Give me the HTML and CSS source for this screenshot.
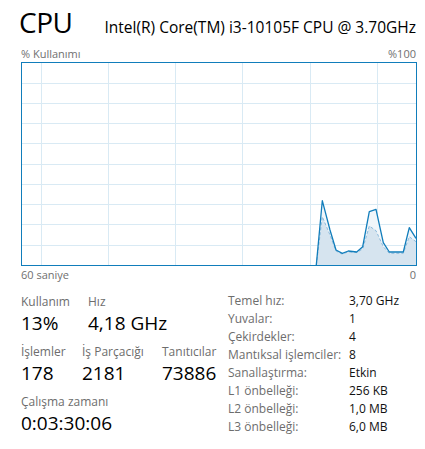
FILE: index.html
```html
<!DOCTYPE html>
<html lang="tr">
<head>
<meta charset="utf-8">
<link rel="stylesheet" href="styles.css">
</head>
<body>
<div class="pane">
  <div class="header">
    <div class="big-title">CPU</div>
    <div class="cpu-name">Intel(R) Core(TM) i3-10105F CPU @ 3.70GHz</div>
  </div>
  <div class="axis-row top-axis"><span>% Kullanımı</span><span>%100</span></div>
  <div class="graph">
    <svg width="396" height="204" viewBox="0 0 396 204" xmlns="http://www.w3.org/2000/svg">
      <g stroke="#d9eaf4" stroke-width="1" fill="none">
        <path d="M0 21.5H396M0 41.5H396M0 61.5H396M0 81.5H396M0 102.5H396M0 122.5H396M0 142.5H396M0 162.5H396M0 183.5H396"/>
        <path d="M20.5 0V204M87.5 0V204M154.5 0V204M221.5 0V204M289.5 0V204M356.5 0V204"/>
      </g>
      <polygon fill="#f1f6fa" points="295.3,203 301.3,138.7 309,168 315,188 321.3,191.3 327.3,189 335.7,190 341.7,184.7 348.3,149.7 355,147.3 362.3,180.7 368.3,190 382.3,190 388.3,165.7 395,176.3 395,203"/>
      <polygon fill="#d6e4ef" points="295.3,203 301.3,154.7 309,173 315,189 321,192 327,190 335.7,190.5 341.7,187 348.3,164 355,168.7 362.3,184.7 368.3,191.3 382.3,191.3 388.3,174.7 395,179.7 395,203"/>
      <polyline fill="none" stroke="#8dbbdc" stroke-width="1" stroke-dasharray="3 2" points="295.3,203 301.3,154.7 309,173 315,189 321,192 327,190 335.7,190.5 341.7,187 348.3,164 355,168.7 362.3,184.7 368.3,191.3 382.3,191.3 388.3,174.7 395,179.7"/>
      <polyline fill="none" stroke="#117dbb" stroke-width="1.3" stroke-linejoin="round" points="295.3,203 301.3,138.7 309,168 315,188 321.3,191.3 327.3,189 335.7,190 341.7,184.7 348.3,149.7 355,147.3 362.3,180.7 368.3,190 382.3,190 388.3,165.7 395,176.3"/>
      <rect x="0.5" y="0.5" width="395" height="203" fill="none" stroke="#117dbb" stroke-width="1"/>
    </svg>
  </div>
  <div class="axis-row bottom-axis"><span>60 saniye</span><span>0</span></div>
  <div class="details">
    <div class="stats">
      <div class="stat-row">
        <div class="stat w-use"><div class="label">Kullanım</div><div class="value">13%</div></div>
        <div class="stat"><div class="label">Hız</div><div class="value">4,18 GHz</div></div>
      </div>
      <div class="stat-row">
        <div class="stat w-proc"><div class="label">İşlemler</div><div class="value">178</div></div>
        <div class="stat w-thr"><div class="label">İş Parçacığı</div><div class="value">2181</div></div>
        <div class="stat"><div class="label">Tanıtıcılar</div><div class="value">73886</div></div>
      </div>
      <div class="stat-row">
        <div class="stat"><div class="label">Çalışma zamanı</div><div class="value">0:03:30:06</div></div>
      </div>
    </div>
    <div class="specs">
      <div class="spec-label">Temel hız:</div><div class="spec-value">3,70 GHz</div>
      <div class="spec-label">Yuvalar:</div><div class="spec-value">1</div>
      <div class="spec-label">Çekirdekler:</div><div class="spec-value">4</div>
      <div class="spec-label">Mantıksal işlemciler:</div><div class="spec-value">8</div>
      <div class="spec-label">Sanallaştırma:</div><div class="spec-value">Etkin</div>
      <div class="spec-label">L1 önbelleği:</div><div class="spec-value">256 KB</div>
      <div class="spec-label">L2 önbelleği:</div><div class="spec-value">1,0 MB</div>
      <div class="spec-label">L3 önbelleği:</div><div class="spec-value">6,0 MB</div>
    </div>
  </div>
</div>
</body>
</html>
```

FILE: styles.css
```css
html, body {
  margin: 0;
  padding: 0;
  background: #ffffff;
}
body {
  font-family: "Open Sans", "Noto Sans", sans-serif;
  color: #000;
  width: 425px;
  height: 449px;
  overflow: hidden;
}
.pane {
  padding: 0 9px 0 21px;
}
.header {
  display: flex;
  justify-content: space-between;
  align-items: baseline;
  height: 44px;
}
.big-title {
  font-size: 28px;
  line-height: 44px;
  margin-left: -2px;
  letter-spacing: -0.5px;
}
.cpu-name {
  font-size: 15.5px;
  line-height: 44px;
}
.axis-row {
  display: flex;
  justify-content: space-between;
  font-size: 11px;
  color: #707070;
  line-height: 15px;
}
.top-axis {
  height: 18px;
  align-items: center;
}
.graph {
  width: 396px;
  height: 204px;
}
.graph svg {
  display: block;
}
.bottom-axis {
  height: 18px;
  margin-top: 1px;
}
.details {
  display: flex;
  margin-top: 9px;
}
.stats {
  width: 207px;
  display: flex;
  flex-direction: column;
}
.stat-row {
  display: flex;
  margin-bottom: 8px;
}
.stat .label {
  font-size: 12px;
  color: #6d6d6d;
  line-height: 16px;
}
.stat .value {
  font-size: 19px;
  line-height: 26px;
}
.w-use { width: 67px; }
.w-proc { width: 61px; }
.w-thr { width: 80px; }
.specs {
  display: grid;
  grid-template-columns: 121px auto;
  grid-auto-rows: 18px;
  font-size: 12px;
  line-height: 18px;
  margin-top: -2px;
  align-self: flex-start;
}
.spec-label {
  color: #6d6d6d;
}
.spec-value {
  color: #111;
}
```
